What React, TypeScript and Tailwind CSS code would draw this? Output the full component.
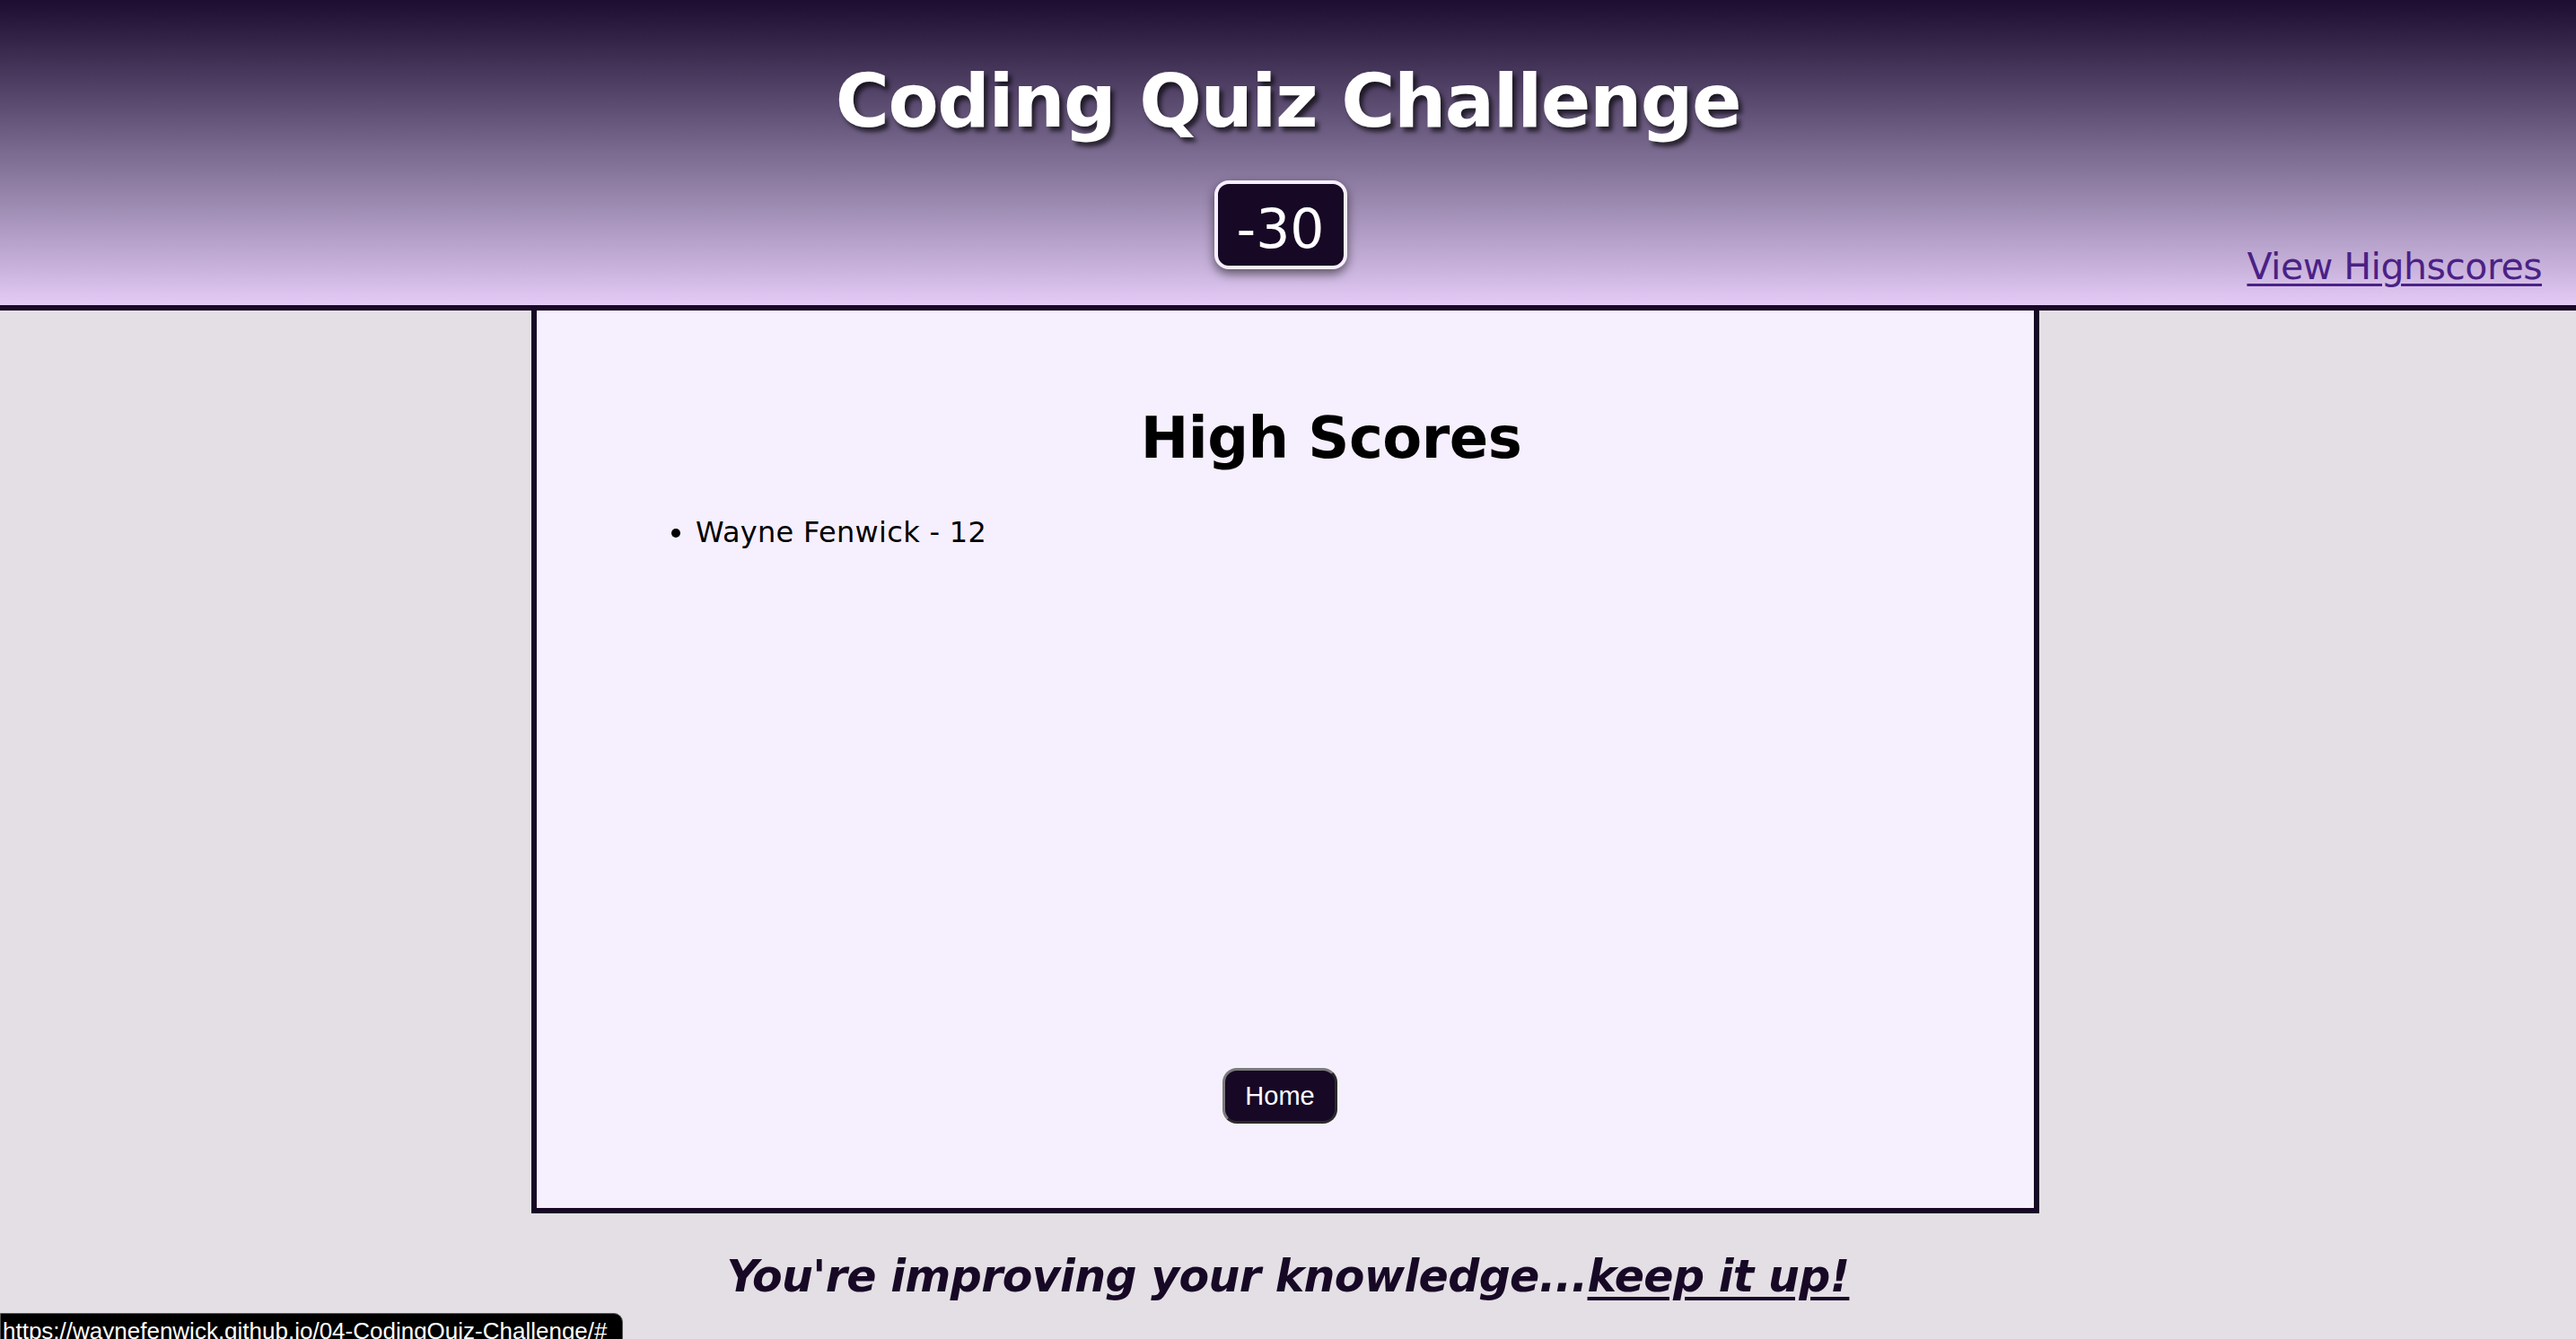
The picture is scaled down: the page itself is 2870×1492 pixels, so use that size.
import { useState } from "react";

function Timer({ seconds }: { seconds: number }) {
  return (
    <div className="mr-[17px] mt-[47px] flex h-[99px] w-[148px] items-center justify-center rounded-[16px] border-4 border-[#f6effd] bg-[#170826] pt-[8px] shadow-[0_5px_12px_rgba(0,0,0,0.55)]">
      <span className="text-[60px] leading-none text-white">{seconds}</span>
    </div>
  );
}

export default function App() {
  const [scores] = useState([{ name: "Wayne Fenwick", score: 12 }]);

  return (
    <div className="relative min-h-screen bg-[#e3dfe4] font-['Verdana','DejaVu_Sans',sans-serif]">
      <header className="relative flex h-[346px] flex-col items-center border-b-[6px] border-[#170826] bg-gradient-to-b from-[#1d0d30] via-[#7b6b90] to-[#e3cbf6]">
        <h1 className="pt-[72px] text-[82px] font-bold leading-[82px] tracking-[-1.5px] text-white [text-shadow:4px_5px_5px_rgba(0,0,0,0.65)]">
          Coding Quiz Challenge
        </h1>
        <Timer seconds={-30} />
        <a
          href="#"
          className="absolute bottom-[22px] right-[38px] text-[41px] leading-none tracking-[-0.5px] text-[#4b2185] underline decoration-[3px] underline-offset-[5px]"
        >
          View Highscores
        </a>
      </header>

      <div className="pr-[6px]">
        <main className="mx-auto flex h-[1006px] w-[1680px] flex-col border-x-[6px] border-b-[6px] border-[#170826] bg-[#f6effd]">
          <section className="pl-[102px]">
            <h2 className="mt-[110px] text-center text-[64px] font-bold leading-[64px] tracking-[-0.5px] text-black">
              High Scores
            </h2>
            <ul className="mt-[57px] list-disc pl-[75px] text-[32px] leading-[32px] tracking-[0.3px] text-black">
              {scores.map((s) => (
                <li key={s.name}>
                  {s.name} - {s.score}
                </li>
              ))}
            </ul>
          </section>
          <button className="mb-[94px] mr-[12px] mt-auto self-center rounded-[16px] border-[3px] border-l-[#7a7a7a] border-t-[#7a7a7a] border-r-[#2a2a2a] border-b-[#2a2a2a] bg-[#170826] px-[22px] py-[13px] font-['Liberation_Sans',Arial,sans-serif] text-[29px] leading-[30px] text-white">
            Home
          </button>
        </main>
      </div>

      <p className="mt-[46px] text-center text-[49px] font-bold italic leading-[49px] tracking-[-0.65px] text-[#170826]">
        You're improving your knowledge...
        <span className="underline decoration-[4px] underline-offset-[6px]">keep it up!</span>
      </p>

      <div className="fixed bottom-[-13px] left-0 h-[42px] rounded-tr-[10px] border border-[#555] bg-black pl-[2px] pr-[16px] pt-[6px] font-['Liberation_Sans',Arial,sans-serif] text-[26px] leading-[26px] text-white">
        https://waynefenwick.github.io/04-CodingQuiz-Challenge/#
      </div>
    </div>
  );
}
